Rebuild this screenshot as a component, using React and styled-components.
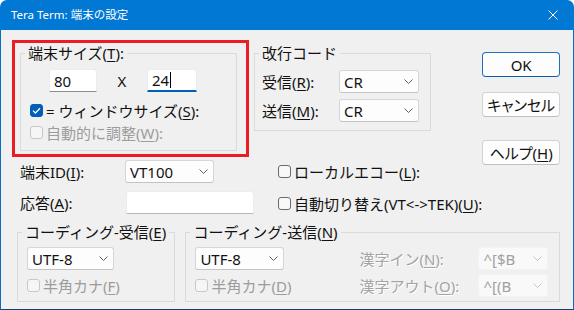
import React from 'react';
import styled, { createGlobalStyle } from 'styled-components';

const FONT = `"Noto Sans", "Noto Sans CJK JP", sans-serif`;

const Global = createGlobalStyle`
  html, body { margin: 0; padding: 0; background: #ffffff; }
  body { font-family: ${FONT}; font-size: 15px; color: #111; }
  * { box-sizing: border-box; }
`;

const Window = styled.div`
  width: 574px;
  height: 310px;
  display: flex;
  flex-direction: column;
  border-radius: 7px 7px 0 0;
  overflow: hidden;
`;

const TitleBar = styled.div`
  height: 30px;
  flex: none;
  background: #0078d4;
  color: #fff;
  display: flex;
  align-items: center;
  padding: 0 11px 0 11px;
  justify-content: space-between;
`;

const TitleText = styled.span`
  font-size: 11.5px;
  line-height: 16px;
`;

const CloseBox = styled.div`
  width: 10px;
  height: 10px;
  margin-right: 5px;
  display: flex;
`;

const Body = styled.div`
  flex: 1;
  background: #f0f0f0;
  border: 1px solid #0a6cc4;
  border-top: none;
  border-bottom-color: #1d3f66;
  padding: 10px 13px 0 11px;
  display: flex;
  flex-direction: column;
`;

const TopArea = styled.div`
  display: flex;
  align-items: flex-start;
`;

const LeftCol = styled.div`
  width: 242px;
  display: flex;
  flex-direction: column;
`;

const MidCol = styled.div`
  display: flex;
  flex-direction: column;
  margin-top: 3px;
`;

const ButtonCol = styled.div`
  margin-left: auto;
  width: 88px;
  display: flex;
  flex-direction: column;
  padding-top: 12px;
`;

const RedBox = styled.div`
  width: 237px;
  height: 117px;
  border: 3px solid #ec1c24;
  padding-left: 5px;
`;

const Group = styled.fieldset`
  margin: 0;
  padding: 0;
  width: ${p => p.$w}px;
  height: ${p => p.$h}px;
  border: 1px solid #dadada;
  min-width: 0;
  margin-left: ${p => p.$ml || 0}px;
`;

const Legend = styled.legend`
  margin-left: 4px;
  padding: 0 3px;
  line-height: 20px;
  height: 20px;
  font-size: 15px;
`;

const SizeRow = styled.div`
  display: flex;
  align-items: center;
  margin-top: 6px;
  padding-left: 28px;
`;

const Times = styled.span`
  width: 50px;
  text-align: center;
`;

const TextBox = styled.div`
  width: ${p => p.$w}px;
  height: 23px;
  background: #ffffff;
  border: 1px solid #ececec;
  border-bottom: ${p => (p.$focus ? '2px solid #005fb8' : `1px solid ${p.$soft ? '#b8b8b8' : '#8c8c8c'}`)};
  border-radius: 3px 3px 0 0;
  display: flex;
  align-items: center;
  padding-left: 4px;
`;

const Caret = styled.span`
  display: inline-block;
  width: 1px;
  height: 16px;
  background: #000;
  margin-left: 1px;
`;

const CheckRow = styled.div`
  display: flex;
  align-items: center;
  height: ${p => p.$h || 22}px;
  padding-left: ${p => p.$pl || 0}px;
  margin-top: ${p => p.$mt || 0}px;
  color: ${p => (p.$disabled ? '#9c9c9c' : '#111')};
  white-space: nowrap;
`;

const Box = styled.span`
  width: 13px;
  height: 13px;
  flex: none;
  border-radius: 3px;
  margin-right: 3px;
  display: flex;
  align-items: center;
  justify-content: center;
  background: ${p => (p.$checked ? '#005fb8' : p.$disabled ? '#f6f6f6' : '#f8f8f8')};
  border: 1px solid ${p => (p.$checked ? '#005fb8' : p.$disabled ? '#c8c8c8' : '#6a6a6a')};
`;

const FieldRow = styled.div`
  display: flex;
  align-items: center;
  height: 23px;
  margin-top: ${p => p.$mt || 0}px;
  padding-left: ${p => p.$pl || 0}px;
`;

const Label = styled.span`
  width: ${p => (p.$w ? `${p.$w}px` : 'auto')};
  flex: none;
  white-space: nowrap;
  color: ${p => (p.$disabled ? '#a3a3a3' : '#111')};
  text-shadow: ${p => (p.$disabled ? '1px 1px 0 #ffffff' : 'none')};
`;

const Select = styled.div`
  width: ${p => p.$w}px;
  height: 23px;
  background: ${p => (p.$disabled ? '#f9f9f9' : '#fdfdfd')};
  border: 1px solid ${p => (p.$disabled ? '#f3f3f3' : '#d6d6d6')};
  border-bottom-color: ${p => (p.$disabled ? '#f3f3f3' : '#c4c4c4')};
  border-radius: 3px;
  display: flex;
  align-items: center;
  justify-content: space-between;
  padding: 0 5px 0 4px;
  color: ${p => (p.$disabled ? '#a0a0a0' : '#111')};
`;

const Button = styled.div`
  height: 25px;
  background: #fdfdfd;
  border: 1px solid ${p => (p.$default ? '#1f6fc0' : '#d3d3d3')};
  border-bottom-color: ${p => (p.$default ? '#0b5cad' : '#c0c0c0')};
  border-radius: 4px;
  display: flex;
  align-items: center;
  justify-content: center;
  margin-top: ${p => p.$mt || 0}px;
  font-feature-settings: "palt";
`;

const BottomArea = styled.div`
  display: flex;
  margin-top: 7px;
  padding-left: 5px;
`;

const CodeGrid = styled.div`
  display: grid;
  grid-template-columns: ${p => p.$cols};
  grid-template-rows: 23px 23px;
  row-gap: 4px;
  align-items: center;
  padding: 5px 0 0 9px;
`;

const Acc = styled.u`
  text-underline-offset: 2px;
`;

const Chevron = ({ light }) => (
  <svg width="9" height="5" viewBox="0 0 9 5">
    <polyline points="0.5,0.5 4.5,4.5 8.5,0.5" fill="none" stroke={light ? '#c4c4c4' : '#606060'} strokeWidth="1" />
  </svg>
);

const Check = () => (
  <svg width="9" height="7" viewBox="0 0 9 7">
    <polyline points="1,3.6 3.4,6 8,1.2" fill="none" stroke="#fff" strokeWidth="1.3" />
  </svg>
);

const DropDown = ({ value, w, disabled }) => (
  <Select $w={w} $disabled={disabled}>
    <span>{value}</span>
    <Chevron light={disabled} />
  </Select>
);

const CheckBox = ({ checked, disabled, children, ...rest }) => (
  <CheckRow $disabled={disabled} {...rest}>
    <Box $checked={checked} $disabled={disabled}>{checked && <Check />}</Box>
    <span>{children}</span>
  </CheckRow>
);

export default function App() {
  return (
    <>
      <Global />
      <Window>
        <TitleBar>
          <TitleText>Tera Term: 端末の設定</TitleText>
          <CloseBox>
            <svg width="10" height="10" viewBox="0 0 10 10">
              <path d="M0.5 0.5 L9.5 9.5 M9.5 0.5 L0.5 9.5" stroke="#fff" strokeWidth="1" />
            </svg>
          </CloseBox>
        </TitleBar>
        <Body>
          <TopArea>
            <LeftCol>
              <RedBox>
                <Group $w={217} $h={108}>
                  <Legend>端末サイズ(<Acc>T</Acc>):</Legend>
                  <SizeRow>
                    <TextBox $w={48}>80</TextBox>
                    <Times>X</Times>
                    <TextBox $w={50} $focus>24<Caret /></TextBox>
                  </SizeRow>
                  <CheckBox checked $pl={9} $mt={7}>= ウィンドウサイズ(<Acc>S</Acc>):</CheckBox>
                  <CheckBox disabled $pl={9}>自動的に調整(<Acc>W</Acc>):</CheckBox>
                </Group>
              </RedBox>
              <FieldRow $mt={3} $pl={8}>
                <Label $w={105}>端末ID(<Acc>I</Acc>):</Label>
                <DropDown value="VT100" w={89} />
              </FieldRow>
              <FieldRow $mt={8} $pl={8}>
                <Label $w={106}>応答(<Acc>A</Acc>):</Label>
                <TextBox $w={135} $soft />
              </FieldRow>
            </LeftCol>
            <MidCol>
              <Group $w={177} $h={88}>
                <Legend>改行コード</Legend>
                <FieldRow $mt={7} $pl={7}>
                  <Label $w={77}>受信(<Acc>R</Acc>):</Label>
                  <DropDown value="CR" w={80} />
                </FieldRow>
                <FieldRow $mt={6} $pl={7}>
                  <Label $w={77}>送信(<Acc>M</Acc>):</Label>
                  <DropDown value="CR" w={80} />
                </FieldRow>
              </Group>
              <CheckBox $h={23} $pl={24} $mt={29}>ローカルエコー(<Acc>L</Acc>):</CheckBox>
              <CheckBox $h={23} $pl={24} $mt={9}>自動切り替え(VT&lt;-&gt;TEK)(<Acc>U</Acc>):</CheckBox>
            </MidCol>
            <ButtonCol>
              <Button $default>OK</Button>
              <Button $mt={15}>キャンセル</Button>
              <Button $mt={23}>ヘルプ(<Acc>H</Acc>)</Button>
            </ButtonCol>
          </TopArea>
          <BottomArea>
            <Group $w={159} $h={80}>
              <Legend>コーディング-受信(<Acc>E</Acc>)</Legend>
              <CodeGrid $cols="140px">
                <DropDown value="UTF-8" w={87} />
                <CheckBox disabled $h={23}>半角カナ(<Acc>F</Acc>)</CheckBox>
              </CodeGrid>
            </Group>
            <Group $w={376} $h={80} $ml={10}>
              <Legend>コーディング-送信(<Acc>N</Acc>)</Legend>
              <CodeGrid $cols="164px 119px 70px">
                <DropDown value="UTF-8" w={89} />
                <Label $disabled>漢字イン(<Acc>N</Acc>):</Label>
                <DropDown value="^[$B" w={70} disabled />
                <CheckBox disabled $h={23}>半角カナ(<Acc>D</Acc>)</CheckBox>
                <Label $disabled>漢字アウト(<Acc>O</Acc>):</Label>
                <DropDown value="^[(B" w={70} disabled />
              </CodeGrid>
            </Group>
          </BottomArea>
        </Body>
      </Window>
    </>
  );
}
